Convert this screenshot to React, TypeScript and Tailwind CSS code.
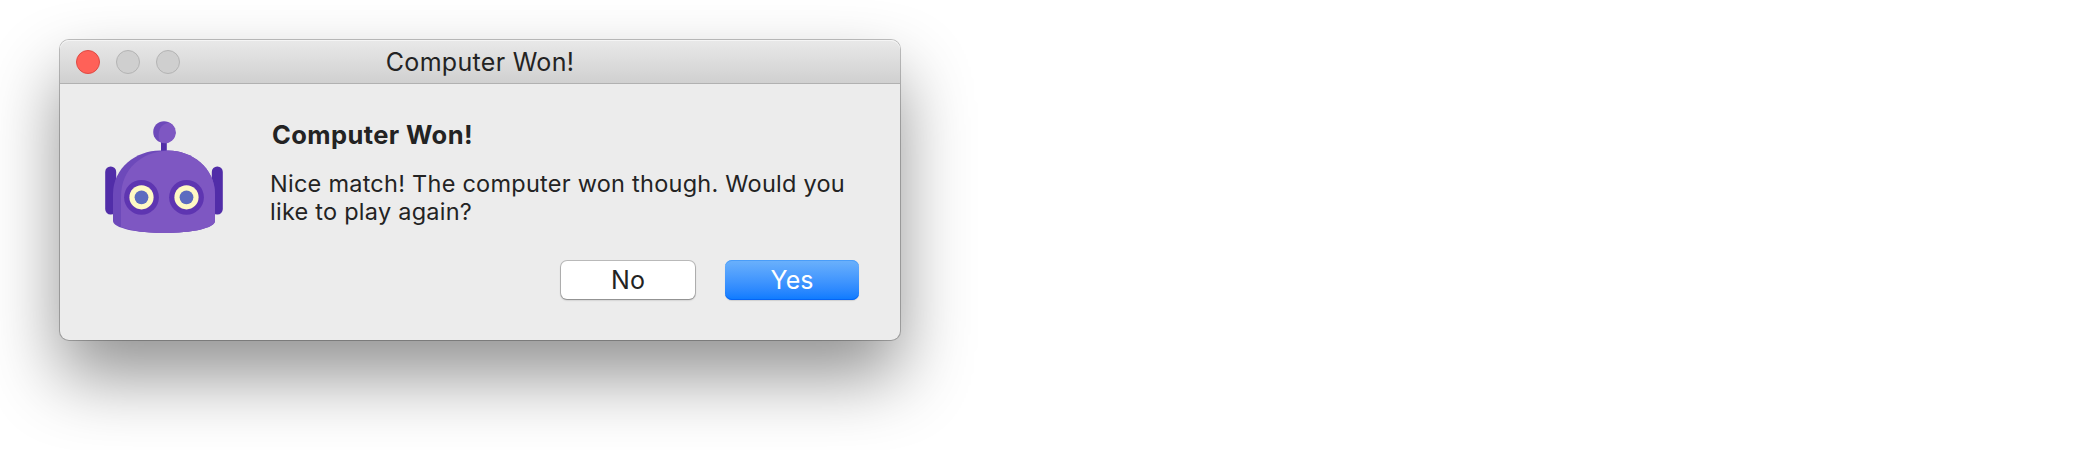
function TrafficLights() {
  return (
    <div className="flex w-[300px] gap-4 pl-4">
      <span className="size-6 rounded-full border border-[#df4a43] bg-[#ff6158]" />
      <span className="size-6 rounded-full border border-[#b4b4b4] bg-[#cfcfcf]" />
      <span className="size-6 rounded-full border border-[#b4b4b4] bg-[#cfcfcf]" />
    </div>
  );
}

function Eye({ cx }: { cx: number }) {
  return (
    <g>
      <circle cx={cx} cy="87.3" r="17.4" fill="#5e35b1" />
      <circle cx={cx} cy="87.3" r="12.1" fill="#fff9c4" />
      <circle cx={cx} cy="87.3" r="6.9" fill="#5c6bc0" />
    </g>
  );
}

function Robot() {
  return (
    <svg width="150" height="135" viewBox="0 0 150 135" className="block">
      <rect x="15.2" y="56.5" width="11" height="48" rx="5.4" fill="#512da8" />
      <rect x="121.8" y="56.5" width="11" height="48" rx="5.4" fill="#512da8" />
      <rect x="71" y="28" width="5.8" height="16" fill="#512da8" />
      <circle cx="74" cy="22" r="10.8" fill="#6d49ba" />
      <path d="M79 12.4A10.8 10.8 0 1 1 70.2 32.1C67.7 28 68.2 20 71.5 16.4C74 13.8 77 12.8 79 12.4Z" fill="#7e57c2" />
      <path d="M23 84C23 58 46 40.5 70 40.5H78C102 40.5 125 58 125 84V111C125 118 102 123 74 123S23 118 23 111Z" fill="#6d49ba" />
      <path d="M31 117V87C31 58 52 42 78 40.5C102 40.5 125 58 125 84V111C125 118 102 123 74 123C57 123 41 120.8 31 117Z" fill="#7e57c2" />
      <Eye cx={51.5} />
      <Eye cx={96.5} />
    </svg>
  );
}

export default function App() {
  return (
    <div className="h-[450px] w-full overflow-hidden bg-white pt-10 pl-[60px] font-['Inter',sans-serif] text-[#232323]">
      <div className="flex h-[300px] w-[840px] flex-col rounded-[9px] bg-[#ececec] shadow-[0_0_0_1px_rgba(0,0,0,0.24),0_36px_70px_rgba(0,0,0,0.43)]">
        <header className="flex h-11 items-center rounded-t-[9px] border-b border-[#b1b1b1] bg-linear-to-b from-[#e9e9e9] to-[#d0d0d0] shadow-[inset_0_1px_0_#f5f5f5]">
          <TrafficLights />
          <h1 className="w-[240px] text-center text-[25px] leading-[30px] tracking-[0.3px] whitespace-nowrap">Computer Won!</h1>
        </header>
        <main className="flex pt-[26px] pl-[30px]">
          <Robot />
          <section className="flex w-[630px] flex-col pl-[30px]">
            <h2 className="mt-[10px] pl-[2px] text-[25.5px] leading-[30px] font-bold tracking-[0.4px]">Computer Won!</h2>
            <p className="mt-5 text-[23.5px] leading-[28px] tracking-[0.25px] whitespace-nowrap">
              Nice match! The computer won though. Would you
              <br />
              like to play again?
            </p>
            <div className="mt-[34px] flex gap-[30px] pl-[291px] text-[25px]">
              <button className="mt-px h-[38px] w-[134px] rounded-[6px] bg-white leading-[38px] shadow-[0_0_0_1px_rgba(0,0,0,0.2),0_1px_2px_rgba(0,0,0,0.3)]">No</button>
              <button className="h-10 w-[134px] rounded-[7px] bg-linear-to-b from-[#6bb1fb] to-[#087aff] leading-10 text-white shadow-[inset_0_1px_0_#4a9df8,inset_0_-1px_0_#0565f5,0_1px_1px_rgba(0,0,0,0.12)]">Yes</button>
            </div>
          </section>
        </main>
      </div>
    </div>
  );
}
